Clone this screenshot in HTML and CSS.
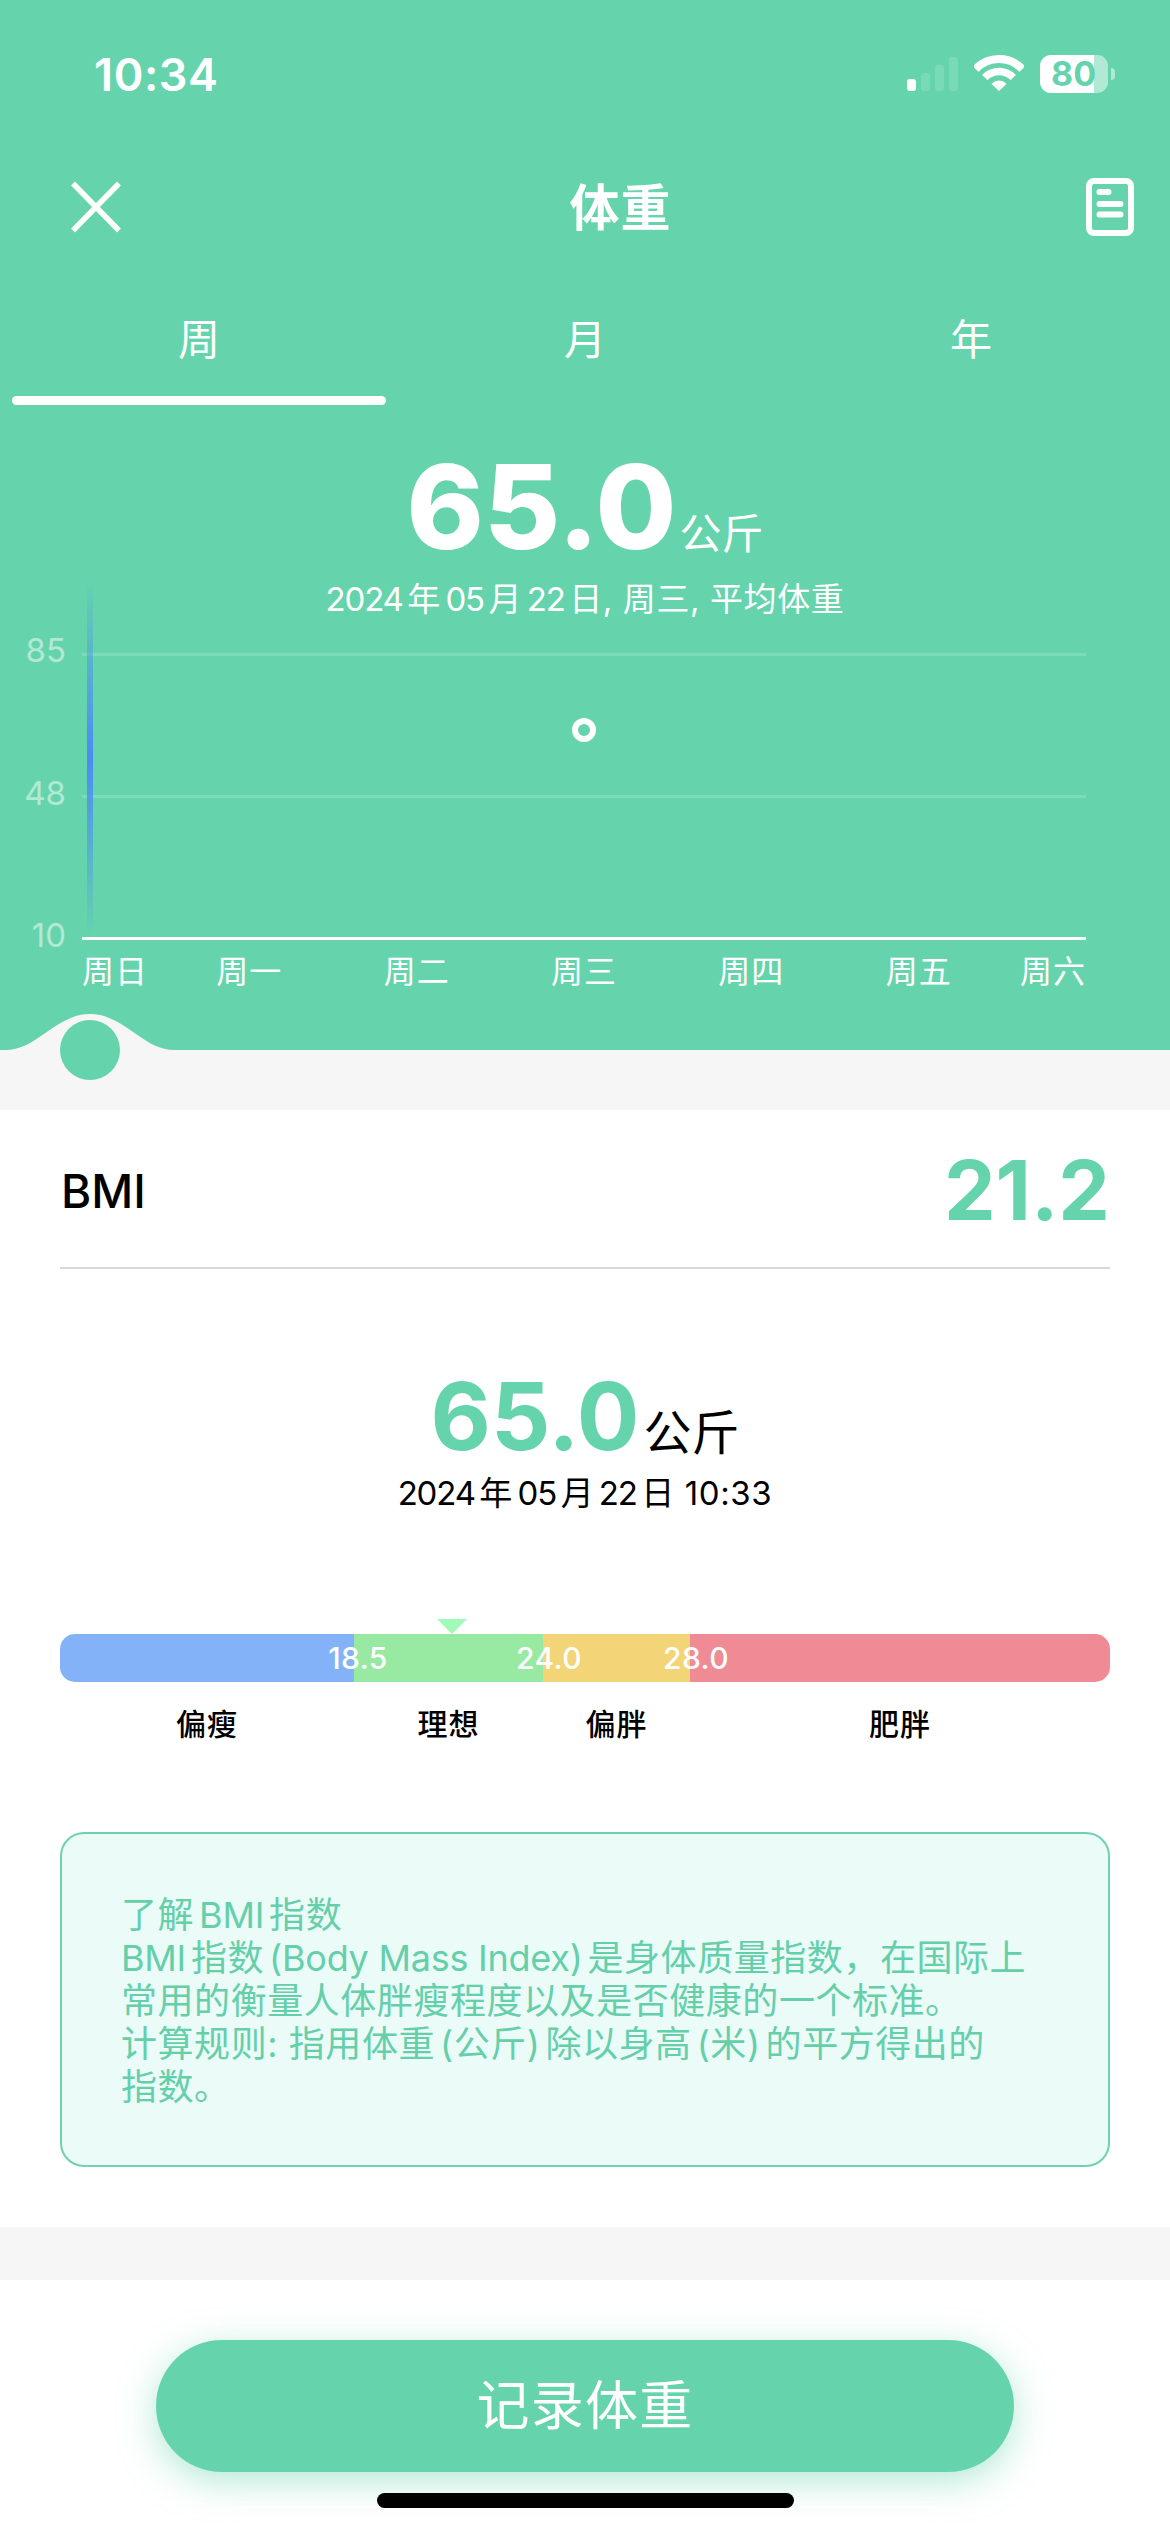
FILE: index.html
```html
<!DOCTYPE html>
<html lang="zh-CN">
<head>
<meta charset="utf-8">
<title>体重</title>
<link rel="stylesheet" href="styles.css">
</head>
<body>
<div class="screen">
  <section class="hero">
    <div class="status-bar">
      <span class="clock">10:34</span>
      <div class="status-icons">
        <svg class="signal" width="51" height="34" viewBox="0 0 51 34" fill="#fff">
          <rect x="0" y="22" width="9" height="12" rx="3"/>
          <rect x="14" y="16" width="9" height="18" rx="3" opacity=".14"/>
          <rect x="28" y="8" width="9" height="26" rx="3" opacity=".14"/>
          <rect x="42" y="0" width="9" height="34" rx="3" opacity=".14"/>
        </svg>
        <svg class="wifi" width="50" height="36" viewBox="0 0 50 36">
          <clipPath id="beam"><path d="M25 36 L-11 2 L-11 -6 L61 -6 L61 2 Z"/></clipPath>
          <g clip-path="url(#beam)" fill="none" stroke="#fff">
            <circle cx="25" cy="36" r="32" stroke-width="8"/>
            <circle cx="25" cy="36" r="19.5" stroke-width="7.4"/>
            <circle cx="25" cy="36" r="10.4" fill="#fff" stroke="none"/>
          </g>
        </svg>
        <div class="battery"><div class="battery-body">80</div><div class="battery-nub"></div></div>
      </div>
    </div>
    <header class="nav">
      <svg width="52" height="54" viewBox="0 0 52 54" stroke="#fff" stroke-width="5.4" fill="none"><path d="M3 3.5 L49 50.5 M49 3.5 L3 50.5"/></svg>
      <h1 class="nav-title">体重</h1>
      <svg class="nav-log" width="48" height="58" viewBox="0 0 48 58" stroke="#fff" fill="none" stroke-width="6" stroke-linecap="round"><rect x="3" y="3" width="42" height="52" rx="5"/><path d="M13.5 14 H22.5 M13.5 26 H34.5 M13.5 36.5 H34.5"/></svg>
    </header>
    <nav class="tabs">
      <span class="tab tab-active">周</span>
      <span class="tab">月</span>
      <span class="tab">年</span>
    </nav>
    <div class="average">
      <div class="average-value"><strong>65.0</strong><span>公斤</span></div>
      <div class="average-date"><b>2024</b>年<b>05</b>月<b>22</b>日, 周三, 平均体重</div>
    </div>
    <div class="chart">
      <div class="y-axis"><span>85</span><span>48</span><span>10</span></div>
      <div class="plot">
        <div class="cursor-line"></div>
        <div class="point"></div>
      </div>
    </div>
    <div class="x-axis">
      <span>周日</span><span>周一</span><span>周二</span><span>周三</span><span>周四</span><span>周五</span><span>周六</span>
    </div>
    <svg class="slider" width="180" height="68" viewBox="0 0 180 68">
      <path d="M0 36 H6 C37 36 56 0 90 0 S143 36 174 36 H180 V68 H0 Z" fill="#f6f6f6"/>
      <circle cx="90" cy="36" r="30" fill="#65d4ac"/>
    </svg>
  </section>

  <section class="bmi">
    <div class="bmi-head"><span class="bmi-label">BMI</span><span class="bmi-value">21.2</span></div>
    <div class="latest">
      <div class="latest-value"><strong>65.0</strong><span>公斤</span></div>
      <div class="latest-date"><b>2024</b>年<b>05</b>月<b>22</b>日 10:33</div>
    </div>
    <div class="scale">
      <div class="marker"></div>
      <div class="scale-bar">
        <div class="seg thin"></div>
        <div class="seg ideal"><b>18.5</b></div>
        <div class="seg over"><b>24.0</b></div>
        <div class="seg obese"><b>28.0</b></div>
      </div>
      <div class="scale-names"><span>偏瘦</span><span>理想</span><span>偏胖</span><span>肥胖</span></div>
    </div>
    <div class="info">
      <p>了解<b>BMI</b>指数</p>
      <p><b class="first">BMI</b>指数<b>(Body Mass Index)</b>是身体质量指数，在国际上</p>
      <p>常用的衡量人体胖瘦程度以及是否健康的一个标准。</p>
      <p>计算规则: 指用体重<i></i>(公斤)<i></i>除以身高<i></i>(米)<i></i>的平方得出的</p>
      <p>指数。</p>
    </div>
  </section>

  <footer class="footer">
    <button class="record">记录体重</button>
    <div class="home-indicator"></div>
  </footer>
</div>
</body>
</html>
```
FILE: styles.css
```css
* { box-sizing: border-box; margin: 0; padding: 0; }

body {
  width: 1170px;
  font-family: Inter, "Noto Sans CJK SC", sans-serif;
  background: #f6f6f6;
  color: #000;
  text-autospace: no-autospace;
}

.screen { display: flex; flex-direction: column; height: 2532px; overflow: hidden; }

.hero { position: relative; height: 1050px; background: #65d4ac; color: #fff; }

.status-bar { display: flex; justify-content: space-between; height: 150px; padding: 55px 55px 0 94px; }
.clock { height: 40px; line-height: 40px; font-size: 45px; font-weight: 600; letter-spacing: .6px; }
.status-icons { display: flex; align-items: flex-start; }
.signal { margin: 2px 16px 0 0; }
.wifi { margin-right: 16px; }
.battery { display: flex; align-items: center; gap: 3px; }
.battery-body {
  width: 68px; height: 38px; padding-left: 11px; border-radius: 11px;
  background: linear-gradient(to right, #fff 54px, #b2e9d5 54px);
  color: #65d4ac; font-size: 34px; font-weight: 700; line-height: 38px;
}
.battery-nub { width: 4px; height: 12px; border-radius: 0 4px 4px 0; background: #b2e9d5; }

.nav { display: flex; justify-content: space-between; align-items: center; height: 114px; padding: 0 36px 0 70px; }
.nav-title { margin-left: 33px; padding-top: 2px; font-size: 50px; font-weight: 600; line-height: 72px; letter-spacing: 1px; }

.tabs { display: grid; grid-template-columns: repeat(3, 1fr); height: 141px; padding: 0 6px; }
.tab { position: relative; padding-top: 46px; text-align: center; font-size: 42px; line-height: 60px; }
.tab-active::after { content: ""; position: absolute; left: 6px; right: 6px; bottom: 0; height: 9px; border-radius: 5px; background: #fff; }

.average { height: 248px; padding-top: 44px; text-align: center; white-space: nowrap; }
.average-value { display: flex; justify-content: center; align-items: baseline; gap: 3px; height: 120px; line-height: 116px; font-size: 42px; }
.average-value strong { font-size: 117px; font-weight: 800; }
.average-date { font-size: 33px; line-height: 60px; letter-spacing: .6px; }
.average-date b, .latest-date b { margin: 0 4.6px; font-weight: 400; letter-spacing: -1.2px; }
.average-date b:first-child, .latest-date b:first-child { margin-left: 0; }

.chart { display: flex; height: 287px; }
.y-axis { display: flex; flex-direction: column; justify-content: space-between; width: 66px; margin: -23px 0 -15px; text-align: right; color: rgba(255, 255, 255, .5); font-size: 33px; line-height: 40px; }
.plot {
  position: relative; width: 1004px; margin-left: 16px; border-bottom: 3px solid #fff;
  background: linear-gradient(#7cdbb9, #7cdbb9) 0 0 / 100% 3px no-repeat, linear-gradient(#7cdbb9, #7cdbb9) 0 142px / 100% 3px no-repeat;
}
.cursor-line { position: absolute; left: 5px; top: -75px; bottom: 0; width: 6px; background: linear-gradient(rgba(75, 139, 244, 0), #4b8bf4 50%, rgba(75, 139, 244, 0)); }
.point { position: absolute; left: 490px; top: 65px; width: 24px; height: 24px; border: 6px solid #fff; border-radius: 50%; }
.x-axis { display: grid; grid-template-columns: 1fr 2fr 2fr 2fr 2fr 2fr 1fr; width: 1004px; margin-left: 82px; padding-top: 8px; font-size: 32px; line-height: 48px; letter-spacing: 1px; text-align: center; white-space: nowrap; }
.x-axis span:first-child { text-align: left; }
.x-axis span:last-child { text-align: right; }
.slider { position: absolute; left: 0; top: 1014px; }

.bmi { height: 1117px; margin-top: 60px; padding: 0 60px; background: #fff; }
.bmi-head { display: flex; justify-content: space-between; align-items: center; height: 159px; padding-top: 4px; border-bottom: 2px solid #d8d8d8; }
.bmi-label { padding-left: 1px; font-size: 46px; font-weight: 500; }
.bmi-value { font-size: 82px; font-weight: 700; color: #65d4ac; }

.latest { height: 350px; padding-top: 97px; text-align: center; }
.latest-value { display: flex; justify-content: center; align-items: baseline; gap: 4px; height: 103px; line-height: 100px; font-size: 48px; }
.latest-value strong { font-size: 93px; font-weight: 700; color: #65d4ac; }
.latest-date { font-size: 33px; line-height: 48px; letter-spacing: .6px; }

.scale { height: 213px; }
.marker { width: 30px; height: 15px; margin-left: 377px; background: #a0fbb9; clip-path: polygon(0 0, 100% 0, 50% 100%); }
.scale-bar { display: grid; grid-template-columns: 294fr 189fr 147fr 420fr; height: 48px; border-radius: 15px; overflow: hidden; }
/* The threshold figures straddle the boundary between two segments. */
.seg { white-space: nowrap; color: #fff; }
.seg b { display: block; position: relative; width: 80px; margin-left: -34px; text-align: center; font-size: 30px; font-weight: 500; line-height: 48px; letter-spacing: .4px; }
.seg.ideal b { margin-left: -36px; }
.thin { background: #84b2f8; }
.ideal { background: #98eaa2; }
.over { background: #f3d577; }
.obese { background: #ef8b95; }
.scale-names { display: grid; grid-template-columns: 294fr 189fr 147fr 420fr; padding-top: 20px; text-align: center; font-size: 30px; font-weight: 500; line-height: 44px; letter-spacing: 1px; }

.info { height: 335px; padding: 60px 59px; border: 2px solid #70d1b1; border-radius: 24px; background: #ebfbf7; color: #65cfaa; font-size: 36px; line-height: 43px; letter-spacing: .55px; white-space: nowrap; }
.info b { margin: 0 5px; font-weight: 400; letter-spacing: -.25px; }
.info b.first { margin-left: 0; }
.info i { display: inline-block; width: 5px; }

.footer { display: flex; flex-direction: column; align-items: center; height: 252px; margin-top: 53px; padding-top: 60px; background: #fff; }
.record { width: 858px; height: 132px; border: 0; border-radius: 66px; background: #65d4ac; box-shadow: 0 9px 36px rgba(101, 212, 172, .5); color: #fff; font: 400 53px/132px Inter, "Noto Sans CJK SC", sans-serif; letter-spacing: 1.2px; }
.home-indicator { width: 417px; height: 15px; margin-top: 21px; border-radius: 8px; background: #000; }
```
